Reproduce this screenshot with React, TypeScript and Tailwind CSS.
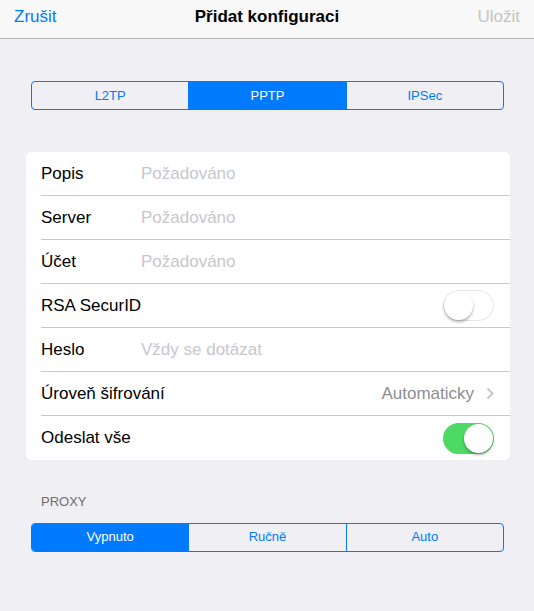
import React from 'react';

const font = { fontFamily: '"Liberation Sans", Arial, sans-serif' };

function Segmented({ items, active }: { items: string[]; active: number }) {
  return (
    <div className="ml-[31px] flex h-[29px] w-[473px] overflow-hidden rounded-[4px] border border-[#007aff]">
      {items.map((label, i) => (
        <div
          key={label}
          className={`flex flex-1 items-center justify-center text-[13px] ${
            i > 0 ? 'border-l border-[#007aff]' : ''
          } ${i === active ? 'bg-[#007aff] text-white' : 'text-[#007aff]'}`}
        >
          {label}
        </div>
      ))}
    </div>
  );
}

function Toggle({ on }: { on: boolean }) {
  return (
    <div
      className={`relative h-[31px] w-[51px] rounded-full ${
        on ? 'bg-[#4cd964]' : 'border border-[#e5e5e5] bg-white'
      }`}
    >
      <div
        className={`absolute h-[29px] w-[29px] rounded-full bg-white shadow-[0_2px_3px_rgba(0,0,0,0.3)] ${
          on ? 'right-[1px] top-[1px]' : 'left-0 top-0'
        }`}
      />
    </div>
  );
}

function Row({ label, last, children }: { label: string; last?: boolean; children?: React.ReactNode }) {
  return (
    <div className="flex h-[44px] items-stretch pl-[15px]">
      <div className={`flex flex-1 items-center pr-[16px] ${last ? '' : 'border-b border-[#c8c7cc]'}`}>
        <span className="min-w-[100px] whitespace-nowrap text-[17px] text-black">{label}</span>
        {children}
      </div>
    </div>
  );
}

const rows = ['Popis', 'Server', 'Účet'];

export default function App() {
  return (
    <div className="h-[611px] w-[534px] bg-[#efeff4]" style={font}>
      {/* Nav bar */}
      <div className="flex h-[39px] items-center justify-between border-b border-[#b2b2b2] bg-[#f8f8f8] px-[14px] pb-[4px]">
        <span className="text-[17px] text-[#007aff]">Zrušit</span>
        <span className="text-[17px] font-bold text-black">Přidat konfiguraci</span>
        <span className="text-[17px] text-[#c4c4c4]">Uložit</span>
      </div>

      <div className="pt-[42px]">
        <Segmented items={['L2TP', 'PPTP', 'IPSec']} active={1} />
      </div>

      <div className="ml-[26px] mt-[42px] w-[484px] overflow-hidden rounded-[5px] bg-white">
        {rows.map((r) => (
          <Row key={r} label={r}>
            <span className="text-[17px] text-[#c7c7cd]">Požadováno</span>
          </Row>
        ))}
        <Row label="RSA SecurID">
          <span className="flex-1" />
          <Toggle on={false} />
        </Row>
        <Row label="Heslo">
          <span className="text-[17px] text-[#c7c7cd]">Vždy se dotázat</span>
        </Row>
        <Row label="Úroveň šifrování">
          <span className="flex-1" />
          <span className="text-[17px] text-[#8e8e93]">Automaticky</span>
          <svg width="8" height="13" viewBox="0 0 8 13" className="ml-[12px]">
            <path d="M1.5 1.5 L6.5 6.5 L1.5 11.5" fill="none" stroke="#c7c7cc" strokeWidth="2" />
          </svg>
        </Row>
        <Row label="Odeslat vše" last>
          <span className="flex-1" />
          <Toggle on />
        </Row>
      </div>

      <div className="mt-[32px] px-[41px] text-[13px] text-[#6d6d72]">PROXY</div>
      <div className="mt-[11px]">
        <Segmented items={['Vypnuto', 'Ručně', 'Auto']} active={0} />
      </div>
    </div>
  );
}
